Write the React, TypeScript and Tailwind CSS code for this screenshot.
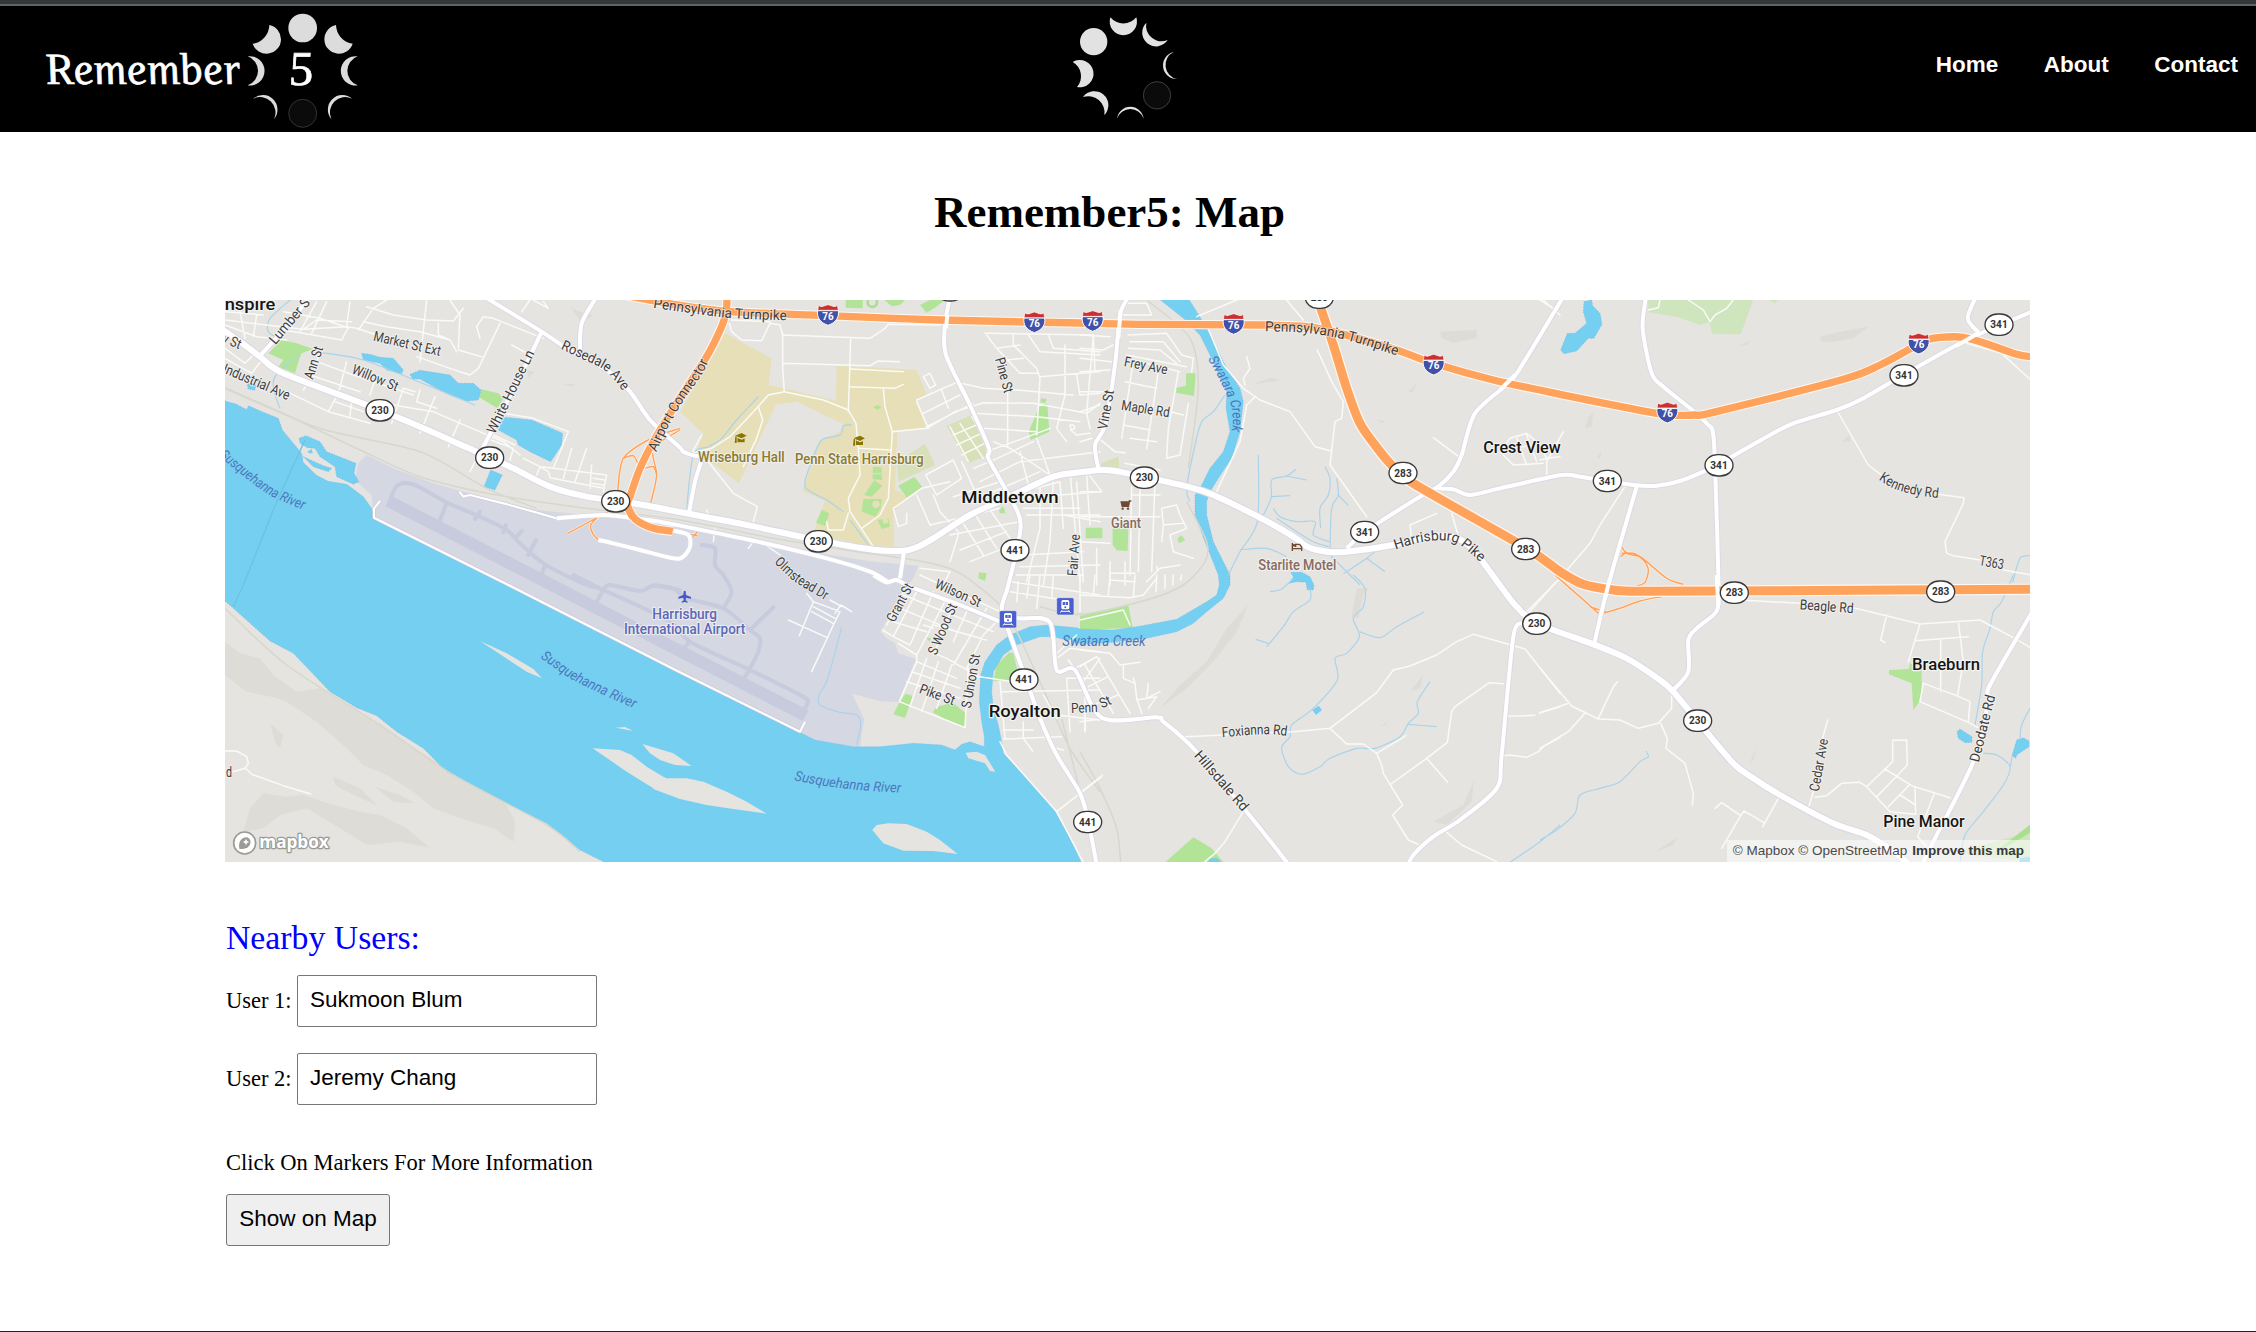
import React from 'react';

/* ---------- map geometry ---------- */

// Map data is stored per sheet; each sheet letter has its own origin.
const SHEETS: Record<string, [number, number]> = {
  A: [660, 885], B: [1920, 885], C: [3240, 885], D: [4620, 885],
  E: [660, 1725], F: [1920, 1725], G: [3240, 1725], H: [4620, 1725],
};

type Pt = [number, number];

function parse(s: string): Pt[][] {
  let o: Pt = [0, 0];
  return s.split('|').map((part) => {
    const pts: Pt[] = [];
    part.trim().split(/\s+/).forEach((tok) => {
      if (SHEETS[tok]) o = SHEETS[tok];
      else {
        const [x, y] = tok.split(',').map(Number);
        pts.push([x + o[0], y + o[1]]);
      }
    });
    return pts;
  });
}

const line = (s: string, close = false) =>
  parse(s).map((p) => 'M' + p.map((q) => q.join(',')).join('L') + (close ? 'Z' : '')).join('');

const curve = (s: string) =>
  parse(s)
    .map((p) => {
      let d = `M${p[0]}`;
      for (let i = 0; i < p.length - 1; i++) {
        const a = p[i - 1] || p[i], b = p[i], c = p[i + 1], e = p[i + 2] || c;
        d += `C${b[0] + (c[0] - a[0]) / 7},${b[1] + (c[1] - a[1]) / 7} ${c[0] - (e[0] - b[0]) / 7},${c[1] - (e[1] - b[1]) / 7} ${c}`;
      }
      return d;
    })
    .join('');

const river =
  'A 15,318 50,328 80,344 85,332 130,352 175,370 187,405 220,445 245,475 250,500 290,540 325,558 380,565 430,605 455,640 460,670 800,840 E 1380,292 F 480,472 525,495 640,515 720,515 820,505 905,510 945,525 965,508 990,500 1033,515 1033,485 1025,440 1018,380 1022,300 1035,260 1070,210 1110,180 1170,155 1220,150 1310,158 G 0,162 100,165 170,155 290,133 380,80 410,60 418,30 415,0 C 375,740 345,660 345,600 365,570 390,520 430,470 450,410 438,340 440,290 400,200 360,120 310,70 235,10 325,10 375,90 410,160 440,220 480,280 490,320 480,410 455,490 415,550 390,590 380,620 380,660 400,740 450,840 G 450,30 430,70 380,110 340,145 290,170 200,190 100,202 0,208 F 1320,205 1240,185 1200,185 1130,210 1090,240 1060,290 1055,350 1060,400 1075,450 1085,500 1090,535 1160,610 1240,700 1290,790 1328,870 E 1170,870 1080,825 980,745 870,690 680,590 610,520 530,470 470,422 410,398 330,350 220,235 150,198 40,100 10,74';

const ponds =
  'A 425,175 450,178 480,187 520,190 550,225 545,236 500,225 480,205 430,195|A 570,238 600,226 640,232 690,240 715,265 760,265 783,285 775,315 740,318 690,300 650,280 600,252 578,252|A 850,366 935,375 1028,415 1025,450 992,500 930,470 895,450 890,435 835,405|A 812,525 847,540 825,585 792,575|A 82,265 108,270 104,286 84,282|A 237,430 258,422 300,440 320,470 370,490 408,505 402,535 417,560 400,568 350,545 345,515 300,485 285,460 262,458 240,445|A 250,485 310,512 335,520 325,530 280,515|D 132,20 155,15 158,32 180,55 186,88 162,130 145,130 110,168 72,176 62,165 82,115 105,115 140,85 130,50|C 628,865 640,845 632,832 665,832 690,845 702,870 700,885 682,885 678,862 650,860|G 698,405 716,393 725,405 708,419|H 1251,470 1260,462 1296,485 1296,502 1275,503 1255,490|H 1430,495 1450,488 1467,498 1467,515 1430,540 1428,550 1416,542|G 385,862 390,852 410,850 425,862|H 1440,850 1475,845 1475,865 1440,865';

const islands =
  'E 780,198 860,235 940,282 966,310 920,290|E 1187,458 1215,456 1240,468|E 1118,520 1200,525 1235,540 1280,575 1330,605 F 80,610 140,610 190,620 260,650 320,680 380,716 280,702 200,690 120,672 40,642 E 1300,640 1220,590|F 7,507 50,520 100,535 155,573 105,570 60,555 30,535|F 697,765 710,750 745,745 800,747 860,770 900,795 953,837 880,828 790,827 730,805|F 977,533 1010,530 1035,540 1066,590 1050,588 1035,565 985,550';

// Sand bar at the mouth of the side channel, drawn under the inlet.
const sandBar = 'A 250,478 268,452 300,466 345,515 352,548 400,568 425,600 380,567 325,558 290,540 250,502';

const airport =
  'A 440,480 520,520 640,565 800,610 950,645 1100,660 1260,672 B 150,690 330,725 540,775 700,800 835,812 820,850 F 780,60 722,170 740,190 765,205 775,235 828,252 775,382 720,378 637,356 672,432 660,515 640,515 525,495 480,470 0,230 E 800,0 A 460,668 455,600 410,560 408,540 415,505';

const campus =
  'B 255,115 395,190 385,270 432,280 588,318 590,213 720,218 830,225 860,300 828,315 862,400 772,405 765,585 782,590 800,610 760,650 762,755 690,755 520,715 555,617 487,587 540,440 600,410 612,388 470,320 408,328 297,565 205,495 165,480 190,415 120,350 215,190';

const parks =
  'A 145,175 185,135 230,145 280,162 245,175 235,200 225,235 175,215 190,195|A 783,283 835,295 850,310 832,340 775,305|B 1200,330 1222,328 1228,410 1172,435 1166,410|B 1203,310 1220,312 1216,324 1201,322|C 318,235 347,235 342,303 288,293 290,278 318,272|C 18,700 67,698 67,730 18,730|C 98,700 145,700 143,768 110,766 98,750|C 292,732 303,720 316,735 297,745|B 1337,698 1380,698 1380,730 1337,730|B 700,515 725,517 725,535 698,533|B 698,538 725,538 727,555 698,553|B 673,600 703,555 727,572 695,605|B 670,612 725,612 722,640 707,665 665,650|B 545,645 568,655 555,693 528,683|B 713,675 745,670 750,695 725,702|B 775,572 823,546 847,575 800,608|B 1075,638 1092,636 1096,655 1080,655|B 1017,832 1040,835 1035,858 1015,850|B 617,15 668,15 668,40 617,38|B 840,30 870,15 915,15 885,38 860,53|B 700,337 712,330 724,337 712,345|F 797,356 818,362 808,392 795,429 760,418 778,383|F 878,412 890,395 912,390 935,380 977,415 975,458 910,430|F 857,188 872,188 870,200|F 1060,318 1070,270 1108,232 1120,235 1132,285 1110,315|F 1320,125 G 0,122 145,90 158,158 0,166 F 1320,160|G 255,862 340,787 395,820 430,862|H 1047,285 1107,282 1110,265 1145,280 1145,350 1137,382 1120,405 1115,325 1047,298';

const lightParks =
  'D 325,14 640,14 602,118 517,117 508,82 480,90 410,65 325,52|D 685,14 715,14 705,25|H 1180,862 1290,820 1475,770 1475,862 1250,835';

const shade =
  'E 15,200 60,235 120,250 160,300 230,350 300,340 400,400 480,450 600,530 720,600 860,690 885,740 880,800 820,760 720,730 640,700 580,650 500,600 430,570 380,520 290,440 200,380 110,350 50,320 15,280|E 90,700 130,655 200,665 250,660 340,690 420,710 480,720 560,760 628,818 540,800 440,810 360,760 260,700 180,720 130,760 70,770|E 150,445 190,480 180,520 165,500|E 340,605 420,640 470,690 400,660 345,630|E 465,635 540,660 585,685 520,680|E 15,210 150,365 80,350 15,300|G 240,400 300,330 380,260 440,160 505,90 470,170 400,260 320,340|G 830,40 868,40 850,60 835,130 815,125|G 990,350 1030,300 1020,340|G 1060,740 1150,690 1182,615 1175,680 1100,750|G 900,455 928,435 915,450|C 1080,110 1190,105 1190,130 1120,143 1085,130|C 520,268 570,248 600,255 540,265|C 890,375 915,378 905,385|C 985,290 1010,265 1000,290|D 840,125 900,110 985,95 940,130 880,140 845,140|D 135,400 145,365 160,355 155,395|D 905,440 930,418 930,440|D 170,490 185,465 180,490|D 595,155 630,135 620,150|H 350,828 410,788 400,810|H 628,565 650,518 640,555|A 1055,40 1080,50 1120,60 1085,85|A 1030,268 1065,266 1060,275|A 920,225 945,230 925,248';

const interstate =
  'B -80,-6 100,28 270,50 560,62 900,75 1320,84 C 200,88 550,90 C 680,95 780,115 950,165 1060,205 1240,255 1440,298 D 350,355 420,361 465,360 520,352 910,253 1020,210 1110,162 1170,132 1220,126 1270,127 1330,143 1430,178 1480,186';
const connector =
  'B 262,0 258,50 245,95 200,185 100,340 40,440 0,520 A 1235,590 1222,630 1245,672 1300,700 1358,709';
const route283 =
  'C 712,10 760,150 800,280 840,385 885,450 930,505 1000,565 1340,760 D 60,830 H 130,28 220,45 300,49 700,47 1480,43';

const ramps =
  'A 1380,400 1290,432 1210,490 1193,590|A 1380,405 1300,460 1310,540 1292,625|A 1210,490 1240,482 1255,510|A 1275,520 1300,515 1310,540|A 1042,716 1165,650|A 1130,670 1112,690 1118,715 1135,735|B 100,707 172,722|B 160,725 172,710|H 45,0 170,110 180,125|H 365,65 300,78 240,100 180,118|D 245,755 260,775 300,785 320,800 380,850 430,868|D 245,775 280,775 310,795 325,825 315,862 H 290,33|D 242,785 260,770|H 150,95 200,112';

const wide =
  'A -20,85 60,140 120,185 190,235 440,330 600,395 780,475 880,520 990,575 1100,605 1240,625 B 150,657 330,692 540,737 700,764 790,767 830,757 880,730 990,660 1120,600 1240,545 1320,532 C 60,525 100,527 190,545 330,577 400,600 540,668 640,725 685,757 740,770 800,770 940,750 1040,725 1120,725 1180,765 1270,885 G 1310,95 1370,145 H 160,208 260,250 360,315 400,350 470,435 580,565 640,610 720,660 880,745 980,780 1060,830 1120,880';

const medium =
  'A 120,182 190,105 270,5|A 965,110 900,245 785,465|A 790,3 965,110 1040,160 1160,225 1230,290 1290,375 1380,458 B 130,470 165,483|B 930,5 915,90 918,180 990,330 1047,460 1045,490 1100,590 1142,690 1105,870 F 1085,100 1105,165 1150,290 1200,430 1250,540 1320,655 1345,740 1372,880|C 145,5 120,60 105,210 75,390 45,450 55,520|C 1450,5 1320,220 1285,265 1185,355 1145,480 1120,530 1075,575 1025,602 854,711 800,760|C 1075,580 1120,583 1170,600 1260,580 D 60,541 120,545 200,558 280,570 350,572 420,558 490,530 540,505 690,420 760,385 890,345 960,315 1090,240 1280,135 1480,48|D 318,5 308,100 335,235 370,275 450,340 500,385 520,420 528,600 H 535,0 535,90 520,120 470,160 445,195 445,290 400,345|D 290,575 205,870 H 163,205|D 1308,5 1283,70 1315,112|F 700,0 740,22 770,15 810,35 960,90 1080,140|F 1080,125 1140,130 1230,142 1250,285 1305,285 1385,428 G 230,427 250,440 340,520 500,710 635,880|G 1330,145 1300,185 1265,540 1250,640 1140,735 1060,785 1000,840 980,880|H 1480,105 1350,330 1345,380 1300,560 1180,800 1140,880|B 165,483 185,490 165,560 148,650|B 792,770 780,850|B 60,680 330,735 560,790 690,830 745,862|B 100,707 145,720 150,755 130,785 100,790 0,765 A 1180,745 1135,735|A 1010,670 1150,660 1260,672 B 60,680|A 1130,5 1085,85 1080,165';

const levee = 'A 480,618 462,640 462,668 870,872 E 1380,292 F 480,470 495,440|A 718,590 730,605 750,600 850,625 940,650 1010,670';

// Local streets, grouped by neighbourhood.
const minor = [
  // west side
  'A 15,75 140,90 250,103 380,95 410,100 470,120|A 15,90 110,125 200,135|A 60,50 75,130|A 110,60 100,125|A 15,50 130,60|A 15,160 75,205 100,180|A 130,190 95,235 15,190|A 190,50 300,70 385,98 365,135 280,120 190,105|A 250,103 290,75 395,80|A 390,20 380,95|A 290,20 240,110|A 320,20 275,115|A 415,105 460,40 500,15|A 440,35 520,60 620,75 700,78 730,40|A 430,80 500,95 600,110 690,135 710,170|A 620,15 600,200|A 655,85 655,120 690,135|A 690,15 720,60 715,160|A 590,185 690,220 750,240 775,220 840,85|A 715,165 785,185|A 780,130 770,95 790,65 820,70 970,130|A 905,50 930,15|A 875,150 930,180|A 940,15 985,40 970,20|A 300,170 275,250 250,285|A 380,200 355,295 325,350|A 470,240 450,300|A 290,200 400,240 580,300|A 270,240 420,290|A 200,290 325,350 450,385|A 345,320 430,350|A 550,280 515,385|A 645,305 600,415|A 720,375 685,455|A 520,330 640,350 720,385 850,440 900,480|A 550,280 585,290|A 600,285 590,320 650,340|A 395,310 390,365|A 790,450 750,530|A 850,355 940,370 1045,410 1000,520|A 800,430 880,460 870,495|A 820,420 885,450|A 910,490 960,515 1000,520 1160,540|A 950,540 960,515 985,530 990,548 1150,580|A 1055,460 1030,550|A 1100,460 1065,560|A 1160,540 1150,590|A 1115,510 1110,580|A 1120,550 1155,555|A 1115,565 1150,570',
  // campus and north middletown
  'B 268,85 275,110 305,135 365,137 390,85 420,90 428,120 428,220 433,290|B 275,75 390,80|B 428,120 690,130 735,100 745,88 900,90|B 428,205 690,212 715,198 778,200|B 632,130 625,350|B 632,222 790,230|B 628,275 765,280 790,268|B 730,280 735,335 757,410 745,610 720,660 665,700|B 433,290 550,315 625,345 648,385 655,460 660,540 625,610 630,650 700,755|B 433,290 385,300 350,340 270,425 215,460 155,475|B 355,335 368,375 350,430 310,515|B 655,460 750,465|B 757,410 860,400 945,350 1030,323 1180,325 1290,345 1340,355 1380,325|B 185,420 155,475|B 205,500 280,595 352,635 340,680|B 200,645 205,660|B 225,700 220,740|B 560,680 565,705 610,705 625,655|B 340,740 325,760|B 370,745 420,780|B 1035,115 1360,120|B 1040,120 1070,160 1140,235 1195,235|B 1120,120 1120,150 1190,220 1200,250 1190,420|B 1165,120 1200,170 1380,180|B 1225,120 1240,160 1380,170|B 1070,160 1140,150|B 1100,195 1150,190|B 1200,245 1380,230|B 1275,150 1275,300 1250,400 1280,440|B 1310,240 1320,300 1380,295|B 1360,120 1340,355 1350,400|B 850,245 870,235 887,270 870,280 850,245|B 830,315 950,262|B 830,320 865,400|B 850,355 960,300|B 905,285 925,340|B 950,262 1030,280 1130,285 1300,300|B 860,395 1000,325|B 1103,280 1103,455|B 1000,355 1190,365 1320,380|B 1030,400 1190,410|B 930,395 985,500|B 960,385 1030,490|B 940,420 1020,385|B 950,450 1035,410|B 965,480 1045,440|B 995,365 1047,450|B 1292,400 1290,390 1300,390 1305,400 1292,405 1310,420 1350,415',
  // middletown core
  'B 857,540 940,495 965,550 890,600 857,540|B 760,640 845,580 930,560|B 760,640 775,695 800,685 800,655|B 830,600 870,690|B 880,600 900,650 955,710|B 965,500 1010,600|B 1000,520 1050,500 1180,440|B 1060,440 1110,460 1230,540|B 1040,470 1150,430 1230,400|B 1020,560 1140,500 1380,470|B 1060,590 1200,530|B 1140,470 1170,590|B 1190,430 1230,540|B 1110,600 1260,560 1270,700|B 940,605 1080,560|B 870,690 1080,640|B 960,670 1030,780|B 1000,650 1070,760|B 1040,630 1110,730|B 930,720 1140,680|B 960,765 1100,710|B 990,800 1090,760|B 1140,610 1380,590|B 1150,640 1320,640|B 1160,660 1380,660|B 1290,530 1320,860|B 1200,580 1200,700 1160,860|B 1240,560 1230,740 1210,870|B 1310,560 1330,860|B 1340,540 1350,690|B 1150,780 1330,770|B 1140,815 1380,810|B 1130,840 1330,840|B 840,820 930,830 910,870|B 955,720 930,800|B 1270,660 1380,680',
  // east of vine st
  'C 145,120 260,115 305,180 340,190 335,230|C 150,140 250,140 300,200|C 145,160 240,165 290,205|C 140,180 320,215|C 160,195 300,230|C 160,195 125,430|C 235,230 200,460|C 295,230 265,400 260,490 300,480 325,325|C 135,260 230,280|C 130,390 210,405|C 230,340 310,360|C 230,440 150,430|C 0,120 90,125|C 0,160 70,165 100,150|C 0,190 95,200|C 0,230 90,225|C 0,290 80,290|C 0,350 60,330|C 40,120 45,230|C 0,440 35,430|C 130,25 200,25 215,60 130,60|C 50,425 105,470 135,473|C 135,505 240,525|C 20,530 65,590 0,590|C 155,600 240,600|C 155,575 150,840|C 180,580 175,830|C 225,560 215,830|C 0,665 240,665|C 250,690 245,640 290,630 300,660 320,700 270,720 280,770 340,790|C 245,740 250,690 310,685|C 0,740 90,745|C 50,760 50,870|C 90,800 90,870|C 135,800 135,870|C 90,835 165,835|C 90,855 165,860|C 200,860 240,820 300,810|C 230,815 232,825|C 350,65 470,15|C 620,15 670,75|C 500,185 510,220 490,250 495,270|C 380,90 430,210 490,280 540,315 630,350 705,455 755,468|C 525,305 500,330 480,440 410,590|C 712,165 755,260 790,320 785,370 765,380 750,510 860,665|C 1060,428 1140,488|C 1070,655 990,690 995,730|C 1115,655 1140,740|C 1390,15 1440,60|C 1260,470 1290,430 1340,415 1370,440 1400,490 1440,485|C 1270,480 1300,510 1390,505|C 1340,420 1370,500|C 1310,430 1340,510|C 1290,460 1370,450',
  // east side
  'D 360,15 355,38 325,45|D 445,15 490,45 510,80 525,60 560,40 580,15|D 890,345 985,510 1030,545|D 1190,597 1272,608 1270,625 1215,740 1220,775 1240,782 1320,795|D 1390,825 1475,840|D 1280,145 1385,175 1480,262|D 255,575 180,690 150,745 60,850 H -40,110|D 70,410 20,500 20,540|D 0,495 25,490|D 0,15 40,40|H 600,75 780,85|H 940,98 1140,147 1320,135 1420,188 1475,220|H 1040,120 1022,195 1035,203|H 1140,147 1105,260|H 1125,197 1285,185|H 1202,195 1202,350|H 1255,140 1270,260 1252,365|H 1150,325 1250,362 1290,380 1285,440|H 1150,325 1140,380 1285,442 1315,458|H 1058,500 1058,560 980,635 1050,710 1127,718|H 1058,496 1100,495 1102,570 1010,665|H 1035,582 1115,632 1230,668|H 1125,635 1127,718|H 1108,630 1045,695|H 1080,660 1127,690|H 1183,655 1133,785 1160,815|H 863,435 845,500|H 820,650 805,700|H 825,667 860,662 905,625 960,622 980,635|H 715,670 668,755|H 525,700 545,683 602,722 545,820|H 602,722 612,708 672,743|H 0,280 95,393 175,432 240,435 295,460 355,445 395,400 395,360|H 175,430 220,335 232,320|H 0,413 82,386|H 135,415 85,470 0,520|H 362,445 382,490 378,520 435,565 460,655 457,690',
  // royalton
  'F 740,150 800,30|F 728,165 760,185 830,50|F 760,185 810,210 880,50|F 775,205 830,240 830,260 778,380|F 830,240 920,70|F 778,380 880,420 975,458|F 870,230 920,250 990,290|F 830,260 950,310|F 815,290 960,340|F 800,320 960,370|F 860,250 810,395|F 895,260 845,410|F 935,270 890,400|F 980,280 1030,180 1070,140|F 880,150 1040,195|F 850,150 880,160|F 980,110 940,200|F 940,90 880,240|F 1040,100 940,270|F 975,458 985,280|F 790,60 1060,170|F 780,100 950,170|F 760,140 860,170|F 840,0 1080,110|F 985,300 1150,325|F 1080,320 1095,490|F 1085,350 1380,345|F 1090,465 1180,465|F 1090,492 1265,485|F 1150,440 1150,490 1178,528|F 1210,360 1250,430|F 1250,520 1270,525|F 1280,310 1290,470|F 1250,420 1380,435|F 1335,380 1335,470|F 1280,310 1380,310|F 1250,250 1290,220 1380,230|F 1285,255 1330,320 1380,250|F 1305,280 1370,245|F 1310,180 1245,240|F 1080,500 1100,540 1250,710 1330,862|F 1250,710 1385,605|F 1110,20 1380,60|F 1110,50 1300,80|F 1135,20 1130,80|F 1170,0 1160,70|F 1200,0 1190,100|F 1240,0 1235,70|F 1320,0 1320,110|F 500,55 520,80 600,110 580,150 515,290|F 520,80 478,182|F 445,135 560,187|F 515,110 580,145|F 520,95 585,130|F 585,115 603,90 635,110|F 570,75 605,95',
  // south-east
  'G 0,225 90,235 120,270 180,262|G 130,270 130,310 165,325 160,310|G 165,325 170,370 185,415|G 170,375 230,365 205,400|G 205,325 200,370 240,350|G 50,245 150,415|G 15,270 100,415|G 0,275 50,245|G 25,335 85,305|G 50,385 115,360|G 0,440 65,432|G 15,350 15,470|G 0,60 150,68 190,60 230,10|G 45,0 40,60|G 90,0 85,60|G 165,0 160,65|G 230,0 228,50|G 255,0 255,40|G 280,0 278,30|G 305,0 302,15|G 0,135 130,105 150,150|G 315,485 640,470 750,460 800,507 850,507 890,535 905,570 910,595 968,690 938,720 985,795 1015,808|G 750,460 890,353 940,285 990,273 1070,240 1130,200 1180,178 1335,222 1440,355|G 890,535 978,482|G 933,627 1040,550 1102,502 1115,410 1125,395 1228,323 1270,326|G 1040,550 1103,622|G 1280,424 1365,421|G 1378,414 1440,395|G 1265,543 1290,540 1340,547 1375,530 1390,515 1440,487|G 1095,768 1145,810 1250,860|G 490,710 435,800 405,835 375,860|G 5,650 68,600|G 1345,115 1425,25|E 15,528 50,528 80,545 85,565 75,580 40,590|E 75,578 95,598 190,632 272,657',
];

const streams =
  'A 210,15 150,70 145,110 185,135|A 300,172 430,195 600,262 765,330|A 235,178 165,245 163,290 180,340|B 355,305 290,375 245,430 205,455 160,480 140,640|B 635,390 610,392 600,420 545,435 515,500 495,575 560,615 610,650|B 630,675 685,750|C 435,300 400,350 365,380 345,450 320,580 330,620|C 535,480 532,680 480,770 445,840|C 648,523 620,543 575,555 573,610 540,680|C 620,543 680,555|C 575,605 630,602|C 580,640 600,665 650,680 705,680 700,720 748,740|C 735,515 750,550 745,600 720,640 722,700|C 770,550 775,600 755,640 750,760|C 775,600 805,632|C 590,670 650,710 700,740 745,755|C 480,765 560,760 620,785|C 910,750 860,790 800,830 790,835|C 860,790 915,830|C 750,780 840,870|G 820,0 855,40 850,95 820,130 838,185 800,235 765,250 772,315 700,400 635,450 630,485 605,518 625,575 665,598 720,575 750,550 830,520 885,520 960,485 985,445 1015,415 1012,380 1050,320|G 838,170 900,188 950,155 1033,110|G 985,448 1070,455|G 690,40 690,75 640,110 610,155 560,215|G 527,193 565,205|G 570,50 605,42 640,10|F 605,157 575,270 555,330 537,360 540,390 600,412 650,420 662,450 650,510|G 1440,750 1380,800 1290,862|H 0,795 50,765 105,715 120,660 180,640 240,620 300,560 325,545 318,528|D 1475,782 1440,790 1418,862|H 1420,0 1385,80 1360,110 1350,160 1328,230 1325,330 1305,450|H 1330,535 1370,540 1410,575 1390,630 1330,710 1275,780 1260,862|H 1475,390 1445,450 1440,490|H 1416,545 1410,580';

const rail =
  'A 15,278 200,360 420,465 600,545 830,600 1100,640 B 120,675 400,730 650,770 850,800 960,835 F 1080,90 1130,170 1200,320 1290,520 1380,650|A 15,280 300,400 600,470 800,580 950,640|F 1265,430 1320,650|G 0,530 60,640 110,760 122,862|C 200,15 330,130 355,280 325,520|C 320,620 380,740 375,800 310,870 G 200,75 0,118 F 1200,95|E 15,100 200,270 480,450 700,600 980,750 1080,830';

const runwayTaxi =
  'A 505,630 525,580 550,564 590,572 680,622 780,665 860,705 900,745 975,808 1100,870 E 1150,45 1350,140 F 150,200 330,285 490,365 502,385 490,408|A 680,622 655,690|A 780,650 765,672|A 858,690 850,712|A 905,708 885,730|A 948,735 925,780|A 975,808 965,840|E 1150,45 1130,80|E 1150,45 1170,30 1260,48 1300,32 1380,45|F 40,30 100,40 140,70 250,100 330,165 360,190 355,230 330,280 315,305|F 330,165 400,97|F 250,100 275,50 250,0 B 225,810 225,760 185,750|F 150,200 135,215|E 1060,0 1150,45';

/* ---------- map labels ---------- */

type Label = [sheet: string, x: number, y: number, angle: number, text: string, width: number, kind?: 'town' | 'water' | 'school' | 'poi' | 'air'];

const labels: Label[] = [
  ['A', 90, 27, 0, 'nspire', 152, 'town'],
  ['A', 208, 78, -50, 'Lumber S', 165],
  ['A', 36, 138, 22, 'y St', 58],
  ['A', 110, 260, 23, 'Industrial Ave', 214],
  ['A', 280, 203, -72, 'Ann St', 100],
  ['A', 562, 145, 13, 'Market St Ext', 206],
  ['A', 466, 248, 22, 'Willow St', 146],
  ['A', 871, 290, -64, 'White House Ln', 272],
  ['C', 198, 211, 11, 'Frey Ave', 132],
  ['C', 197, 341, 9, 'Maple Rd', 146],
  ['C', 77, 344, -80, 'Vine St', 120],
  ['B', 1093, 240, 75, 'Pine St', 108],
  ['B', 1301, 780, -86, 'Fair Ave', 126],
  ['F', 779, 82, -62, 'Grant St', 124],
  ['F', 955, 54, 24, 'Wilson St', 146],
  ['F', 907, 162, -67, 'S Wood St', 162],
  ['F', 992, 318, -80, 'S Union St', 164],
  ['F', 892, 358, 20, 'Pike St', 110],
  ['F', 1333, 398, -2, 'Penn', 80],
  ['G', 75, 380, -25, 'St', 34],
  ['D', 1355, 802, 10, 'T363', 74],
  ['H', 860, 94, 4, 'Beagle Rd', 162],
  ['H', 836, 570, -80, 'Cedar Ave', 160],
  ['H', 1327, 460, -76, 'Deodate Rd', 205],
  ['G', 425, 617, 49, 'Hillsdale Rd', 224],
  ['E', 27, 592, 0, 'd', 18],
  ['B', 1110, 607, 0, 'Middletown', 292, 'town'],
  ['F', 1154, 409, 0, 'Royalton', 216, 'town'],
  ['C', 1326, 455, 0, 'Crest View', 232, 'town'],
  ['H', 1218, 266, 0, 'Braeburn', 204, 'town'],
  ['H', 1152, 738, 0, 'Pine Manor', 244, 'town'],
  ['B', 304, 485, 0, 'Wriseburg Hall', 260, 'school'],
  ['B', 658, 493, 0, 'Penn State Harrisburg', 386, 'school'],
  ['C', 138, 683, 0, 'Giant', 90, 'poi'],
  ['C', 652, 811, 0, 'Starlite Motel', 234, 'poi'],
  ['F', 134, 118, 0, 'Harrisburg', 194, 'air'],
  ['F', 134, 163, 0, 'International Airport', 364, 'air'],
  ['F', 1392, 199, 0, 'Swatara Creek', 250, 'water'],
];

const curvedLabels: [path: string, text: string, width: number, kind?: 'water'][] = [
  ['A 1023,158 1080,184 1150,218 1185,251 1215,290', 'Rosedale Ave', 232],
  ['B 40,34 150,50 270,65 450,72', 'Pennsylvania Turnpike', 402],
  ['B 45,470 80,395 130,310 180,240 210,180', 'Airport Connector', 314],
  ['B 405,800 460,852 F 520,50 590,91', 'Olmstead Dr', 190],
  ['C 555,105 660,108 760,122 850,145 970,184', 'Pennsylvania Turnpike', 406],
  ['C 388,190 426,260 455,325 463,380 455,430', 'Swatara Creek', 236, 'water'],
  ['C 945,760 1020,738 1090,732 1140,745 1220,812', 'Harrisburg Pike', 284],
  ['D 1018,550 1065,578 1130,596 1220,608', 'Kennedy Rd', 188],
  ['G 427,483 520,475 580,474 630,480', 'Foxianna Rd', 194],
  ['A 0,480 60,530 140,590 200,620 290,655', 'Susquehanna River', 300, 'water'],
  ['E 963,245 1050,305 1150,355 1270,408', 'Susquehanna River', 320, 'water'],
  ['F 463,612 560,630 680,643 800,650', 'Susquehanna River', 322, 'water'],
];

const labelFill = { road: '#3d3d3f', town: '#151515', water: '#4c76bd', school: '#8a7a32', poi: '#866b5e', air: '#5b68b8' };

const shields: [string, number, number, string][] = [
  ['A', 480, 346, '230'], ['A', 809, 488, '230'], ['A', 1187, 619, '230'], ['B', 535, 739, '230'],
  ['B', 1125, 766, '441'], ['B', 930, -14, '441'], ['C', 193, 548, '230'], ['C', 718, 8, '283'], ['C', 969, 534, '283'],
  ['C', 854, 711, '341'], ['C', 1337, 762, '283'], ['D', 1377, 89, '341'], ['D', 1092, 241, '341'],
  ['D', 537, 511, '341'], ['D', 202, 558, '341'], ['H', 583, 53, '283'], ['H', 1202, 50, '283'],
  ['G', 1370, 146, '230'], ['H', 473, 437, '230'], ['F', 1152, 314, '441'], ['F', 1343, 741, '441'],
];

const interstates: [string, number, number][] = [
  ['B', 564, 60], ['B', 1183, 82], ['B', 1358, 78], ['C', 461, 87], ['C', 1061, 209], ['D', 382, 353], ['D', 1136, 146],
];

const at = (s: string, x: number, y: number) => `translate(${SHEETS[s][0] + x} ${SHEETS[s][1] + y})`;

function MapCanvas() {
  return (
    <svg viewBox="675 900 5415 1686" className="block h-full w-full" fontFamily='Roboto, "Open Sans", sans-serif'>
      <rect x="675" y="900" width="5415" height="1686" fill="#e5e4e0" />
      <path d={line(shade, true)} fill="#dddcd7" />
      <path d={line(lightParks, true)} fill="#cfe5be" />
      <path d={line(airport, true)} fill="#d5d8e2" />
      <path d={line(campus, true)} fill="#e6dfb8" />
      <path d={line('B 920,393 995,360 1045,480 985,505|B 770,500 855,447 885,510 775,560|C 65,505 115,485 118,520 65,518', true)} fill="#d8e0b9" />
      <path d={line(parks, true)} fill="#b2e498" />
      <path d={line('H 1360,835 1475,745 1475,770 1400,815', true)} fill="#aadf90" />
      <circle cx={SHEETS.B[0] + 708} cy={SHEETS.B[1] + 628} r="11" fill="#e6dfb8" />
      <circle cx={SHEETS.B[0] + 736} cy={SHEETS.B[1] + 678} r="8" fill="#e6dfb8" />
      <circle cx={SHEETS.B[0] + 697} cy={SHEETS.B[1] + 22} r="14" fill="none" stroke="#aadf90" strokeWidth="8" />
      <path d={line('B 733,15 795,15 780,30 755,34', true)} fill="#b2e498" />
      <path d={line(river, true)} fill="#75cff0" stroke="#6fb0ee" strokeWidth="2" strokeDasharray="3 5" />
      <path d={line(sandBar, true)} fill="#e5e4e0" />
      <path d={line(ponds, true)} fill="#75cff0" stroke="#6fb0ee" strokeWidth="2" strokeDasharray="3 5" />
      <path d={line(islands, true)} fill="#e5e4e0" />
      <path d={line('A 262,470 275,462 278,475 268,475', true)} fill="#75cff0" />
      <path d={line('A 255,435 170,620 70,870 E 40,95')} fill="none" stroke="#6bc3e2" strokeWidth="4" />
      <g fill="none" strokeLinejoin="round">
        <path d={curve(streams)} stroke="#a9d3ea" strokeWidth="3.5" />
        <path d={line('A 505,618 F 497,422')} stroke="#c8cadd" strokeWidth="36" />
        <path d={curve(runwayTaxi)} stroke="#c8cadd" strokeWidth="12" strokeLinecap="round" />
        <path d={curve(rail)} stroke="#d8d7cd" strokeWidth="4.5" />
        {minor.map((m, i) => (
          <path key={i} d={line(m)} stroke="#fafaf8" strokeWidth="4.5" strokeLinecap="round" />
        ))}
        <path d={line(levee)} stroke="#c9c5d6" strokeWidth="10" />
        <path d={line(levee)} stroke="#ffffff" strokeWidth="6.5" />
        <path d={curve(ramps)} stroke="#fff3e8" strokeWidth="8" />
        <path d={curve(ramps)} stroke="#ffa35c" strokeWidth="4.5" />
        <path d={curve(medium)} stroke="#d9d8e6" strokeWidth="17" />
        <path d={curve(wide)} stroke="#d9d8e6" strokeWidth="24" />
        <path d={curve(medium)} stroke="#ffffff" strokeWidth="12" />
        <path d={curve(route283)} stroke="#fff8f2" strokeWidth="34" />
        <path d={curve(connector)} stroke="#fff8f2" strokeWidth="28" />
        <path d={curve(interstate)} stroke="#fff8f2" strokeWidth="28" />
        <path d={curve(route283)} stroke="#ffa35c" strokeWidth="27" />
        <path d={curve(connector)} stroke="#ffa35c" strokeWidth="22" />
        <path d={curve(interstate)} stroke="#ffa35c" strokeWidth="22" />
        <path d={curve(wide)} stroke="#ffffff" strokeWidth="18" />
        <path d={line('B 922,60 918,100|C 122,45 115,130|C 1305,240 1260,285|D 1250,152 1320,112|D 210,850 H 195,70|D 530,840 H 535,90')} stroke="#ffffff" strokeWidth="12" />
        <path d={curve('A 1232,600 1222,630 1240,668')} stroke="#ffa35c" strokeWidth="22" />
      </g>

      {/* road and place names */}
      {labels.map(([s, x, y, a, text, w, kind], i) => (
        <text
          key={i}
          transform={`${at(s, x, y)} rotate(${a})`}
          dy="0.35em"
          textAnchor="middle"
          textLength={w}
          lengthAdjust="spacingAndGlyphs"
          fontSize={kind === 'town' ? 50 : 42}
          fontWeight={kind === 'town' || kind === 'school' || kind === 'poi' || kind === 'air' ? 500 : 400}
          fontStyle={kind === 'water' ? 'italic' : 'normal'}
          fill={labelFill[kind || 'road']}
          stroke={kind === 'water' ? 'none' : '#f4f3f1'}
          strokeOpacity={kind === 'town' ? 1 : 0.75}
          strokeWidth="7"
          strokeLinejoin="round"
          paintOrder="stroke"
        >
          {text}
        </text>
      ))}
      {curvedLabels.map(([d, text, w, kind], i) => (
        <g key={i}>
          <path id={`name-${i}`} d={curve(d)} fill="none" />
          <text
            dy="4"
            fontSize="42"
            fontStyle={kind ? 'italic' : 'normal'}
            fill={labelFill[kind || 'road']}
            stroke={kind ? 'none' : '#f4f3f1'}
            strokeOpacity="0.6"
            strokeWidth="6"
            paintOrder="stroke"
          >
            <textPath href={`#name-${i}`} textLength={w} lengthAdjust="spacingAndGlyphs">{text}</textPath>
          </text>
        </g>
      ))}

      {/* state route shields */}
      {shields.map(([s, x, y, n], i) => (
        <g key={i} transform={at(s, x, y)}>
          <rect x="-42" y="-32" width="84" height="64" rx="38" ry="32" fill="#fff" stroke="#38383a" strokeWidth="4" />
          <text y="11" textAnchor="middle" fontSize="31" fontWeight="700" fill="#333" textLength="52" lengthAdjust="spacingAndGlyphs">{n}</text>
        </g>
      ))}
      {interstates.map(([s, x, y], i) => (
        <g key={i} transform={at(s, x, y)}>
          <path d="M-31,-13 H31 C34,5 26,22 0,31 C-26,22 -34,5 -31,-13Z" fill="#3f51a8" stroke="#fff" strokeWidth="3" />
          <path d="M-28,-29 Q-22,-23 -15,-26 Q-7,-29 0,-31 Q7,-29 15,-26 Q22,-23 28,-29 L31,-14 H-31Z" fill="#cc2f2f" stroke="#fff" strokeWidth="2" />
          <text y="14" textAnchor="middle" fontSize="32" fontWeight="700" fill="#fff" textLength="34" lengthAdjust="spacingAndGlyphs">76</text>
        </g>
      ))}

      {/* point of interest glyphs */}
      {([[302, 430], [657, 438]] as Pt[]).map(([x, y]) => (
        <g key={x} transform={at('B', x, y)} fill="#8a7500" stroke="#f3eed6" strokeWidth="2" paintOrder="stroke">
          <path d="M-17,-8 L3,-16 L18,-8 L3,0Z" />
          <path d="M-10,-2 L3,4 L12,0 V12 H-10Z" />
          <path d="M-16,-6 h4 v20 h-6Z" />
        </g>
      ))}
      <g transform={at('C', 136, 629)} fill="#6e4a35">
        <path d="M-15,-10 H10 V-13 H18 V-9 H14 L11,7 H-11Z" />
        <circle cx="-8" cy="12" r="3.5" />
        <circle cx="8" cy="12" r="3.5" />
      </g>
      <g transform={at('C', 651, 756)} fill="none" stroke="#6e4a35" strokeWidth="4">
        <path d="M-14,-12 V12 M-14,5 H14 V12 M-4,0 V-8 H8 L14,0 V5" />
        <circle cx="-9" cy="-5" r="2" />
      </g>
      <g transform={at('F', 134, 65)} fill="#4458c8">
        <path d="M-3,-16 Q0,-20 3,-16 L4,-5 L19,1 V6 L4,3 L3,11 L9,15 V18 L0,16 L-9,18 V15 L-3,11 L-4,3 L-19,6 V1 L-4,-5Z" />
      </g>
      {([[1104, 133], [1276, 94]] as Pt[]).map(([x, y]) => (
        <g key={x} transform={at('F', x, y)}>
          <rect x="-26" y="-26" width="52" height="52" rx="5" fill="#4a5fd0" stroke="#e9e9f4" strokeWidth="2" />
          <rect x="-12" y="-19" width="24" height="28" rx="5" fill="#fff" />
          <rect x="-8" y="-13" width="7" height="9" fill="#4a5fd0" />
          <rect x="1" y="-13" width="7" height="9" fill="#4a5fd0" />
          <circle cx="0" cy="3" r="3" fill="#4a5fd0" />
          <path d="M-10,12 L-15,19 M10,12 L15,19 M-12,15 H12" stroke="#fff" strokeWidth="3" />
        </g>
      ))}

      {/* mapbox wordmark */}
      <g transform={at('E', 74, 804)}>
        <circle r="33" fill="#fff" stroke="#9a9a97" strokeWidth="5" />
        <path d="M-16,17 C-20,-2 -10,-17 5,-17 C17,-16 21,-2 14,8 C7,17 -6,19 -16,17Z" fill="#9a9a97" />
        <path d="M4,-13 L7,-6 L14,-3 L7,0 L4,7 L1,0 L-6,-3 L1,-6Z" fill="#fff" />
        <text x="44" y="15" fontFamily='"Open Sans", sans-serif' fontSize="54" fontWeight="700" fill="#fff" stroke="#9a9a97" strokeWidth="8" strokeLinejoin="round" paintOrder="stroke" textLength="208" lengthAdjust="spacingAndGlyphs">
          mapbox
        </text>
      </g>
    </svg>
  );
}

/* ---------- header artwork ---------- */

function Logo() {
  return (
    <svg viewBox="120 18 980 375" className="h-[125px] w-[326.7px]">
      <g fontFamily='"Liberation Serif", serif' fontStyle="italic" fill="#fff" stroke="#fff" strokeWidth="2">
        <text transform="translate(144 252) skewX(12)" fontSize="134" textLength="586" lengthAdjust="spacing">
          Remember
        </text>
        <text transform="translate(872 254) skewX(6)" fontSize="146">5</text>
      </g>
      <g fill="#dcdcdc">
        <circle cx="908" cy="84" r="43" />
        {['', 'translate(1816 0) scale(-1 1)'].map((t) => (
          <g key={t} transform={t || undefined}>
            <path d="M1008,75 A43.5,43.5 0 1 0 1058,131 A58,58 0 0 1 1008,75Z" />
            <path d="M1073,169 A44,44 0 1 0 1073,256 A46,46 0 0 1 1073,169Z" />
            <path d="M1056,296 A43.6,43.6 0 0 0 994,357 A46,46 0 0 1 1056,296Z" />
          </g>
        ))}
      </g>
      <circle cx="908" cy="340" r="42" fill="#0b0b0b" stroke="#3c3c3c" strokeWidth="2.5" />
    </svg>
  );
}

function MoonRing() {
  return (
    <svg viewBox="80 18 350 375" className="h-[125px] w-[116.7px]" fill="#e2e2e2">
      <circle cx="160" cy="125" r="41" />
      <path d="M210,52 A41,41 0 1 0 288,52 A51,51 0 0 1 210,52Z" />
      <path d="M318,68 A41.5,41.5 0 1 0 382,120 A47,47 0 0 1 318,68Z" />
      <path d="M400,156 A41,41 0 0 0 410,237 A43,43 0 0 1 400,156Z" />
      <circle cx="350" cy="286" r="41" fill="#0b0b0b" stroke="#484848" strokeWidth="2.5" />
      <path d="M230,356 A40.3,40.3 0 0 1 310,356 A42,42 0 0 0 230,356Z" />
      <path d="M128,291 A42,42 0 1 1 192,345 A49,49 0 0 0 128,291Z" />
      <path d="M97,186 A41,41 0 1 1 110,261 A49,49 0 0 0 97,186Z" />
    </svg>
  );
}

/* ---------- page ---------- */

function UserRow({ label, value }: { label: string; value: string }) {
  return (
    <div className="flex items-center gap-[5px]">
      <label className="w-[66px] whitespace-nowrap leading-[26px]">{label}</label>
      <input
        readOnly
        value={value}
        className="h-[52px] w-[300px] rounded-[2px] border border-[#767676] bg-white px-[12px] pb-[2px] font-['Liberation_Sans',sans-serif] text-[22.5px] text-black outline-none"
      />
    </div>
  );
}

export default function App() {
  return (
    <div className="flex h-[1332px] w-[2256px] flex-col overflow-hidden border-b border-[#222] bg-white font-['Liberation_Serif',serif] text-[22.5px] text-black">
      <div className="h-1 shrink-0 bg-[#35363a]" />
      <div className="h-0.5 shrink-0 bg-[#5f6368]" />
      <header className="flex h-[126px] shrink-0 items-start bg-black">
        <div className="w-[1067px] pl-10">
          <Logo />
        </div>
        <MoonRing />
        <nav className="ml-auto flex gap-[45.5px] pt-[46px] pr-[18px] font-['Liberation_Sans',sans-serif] leading-[26px] font-bold text-white">
          <a>Home</a>
          <a>About</a>
          <a>Contact</a>
        </nav>
      </header>

      <main className="ml-[225px] w-[1805px]">
        <h1 className="mt-[54px] w-[1769px] text-center text-[45px] leading-[52px] font-bold">Remember5: Map</h1>

        <section className="relative mt-[62px] h-[562px] w-[1805px] overflow-hidden">
          <MapCanvas />
          <div className="absolute right-0 bottom-0 flex h-[22px] items-center gap-[5px] bg-white/50 px-[6px] font-['Liberation_Sans',sans-serif] text-[13.5px] whitespace-nowrap text-[#4a4a4a]">
            <span>© Mapbox © OpenStreetMap</span>
            <b className="text-[#3a3a3a]">Improve this map</b>
          </div>
        </section>

        <div className="pl-[1px]">
          <h2 className="mt-[56px] text-[33.75px] leading-[39px] text-[#0000ff]">Nearby Users:</h2>
          <div className="mt-[18px] flex flex-col gap-[26px]">
            <UserRow label="User 1:" value="Sukmoon Blum" />
            <UserRow label="User 2:" value="Jeremy Chang" />
          </div>
          <p className="mt-[45px] leading-[26px]">Click On Markers For More Information</p>
          <button className="mt-[18px] block h-[52px] w-[164px] rounded-[3px] border border-[#767676] bg-[#efefef] pb-[3px] text-center font-['Liberation_Sans',sans-serif] text-[22.5px]">
            Show on Map
          </button>
        </div>
      </main>
    </div>
  );
}
